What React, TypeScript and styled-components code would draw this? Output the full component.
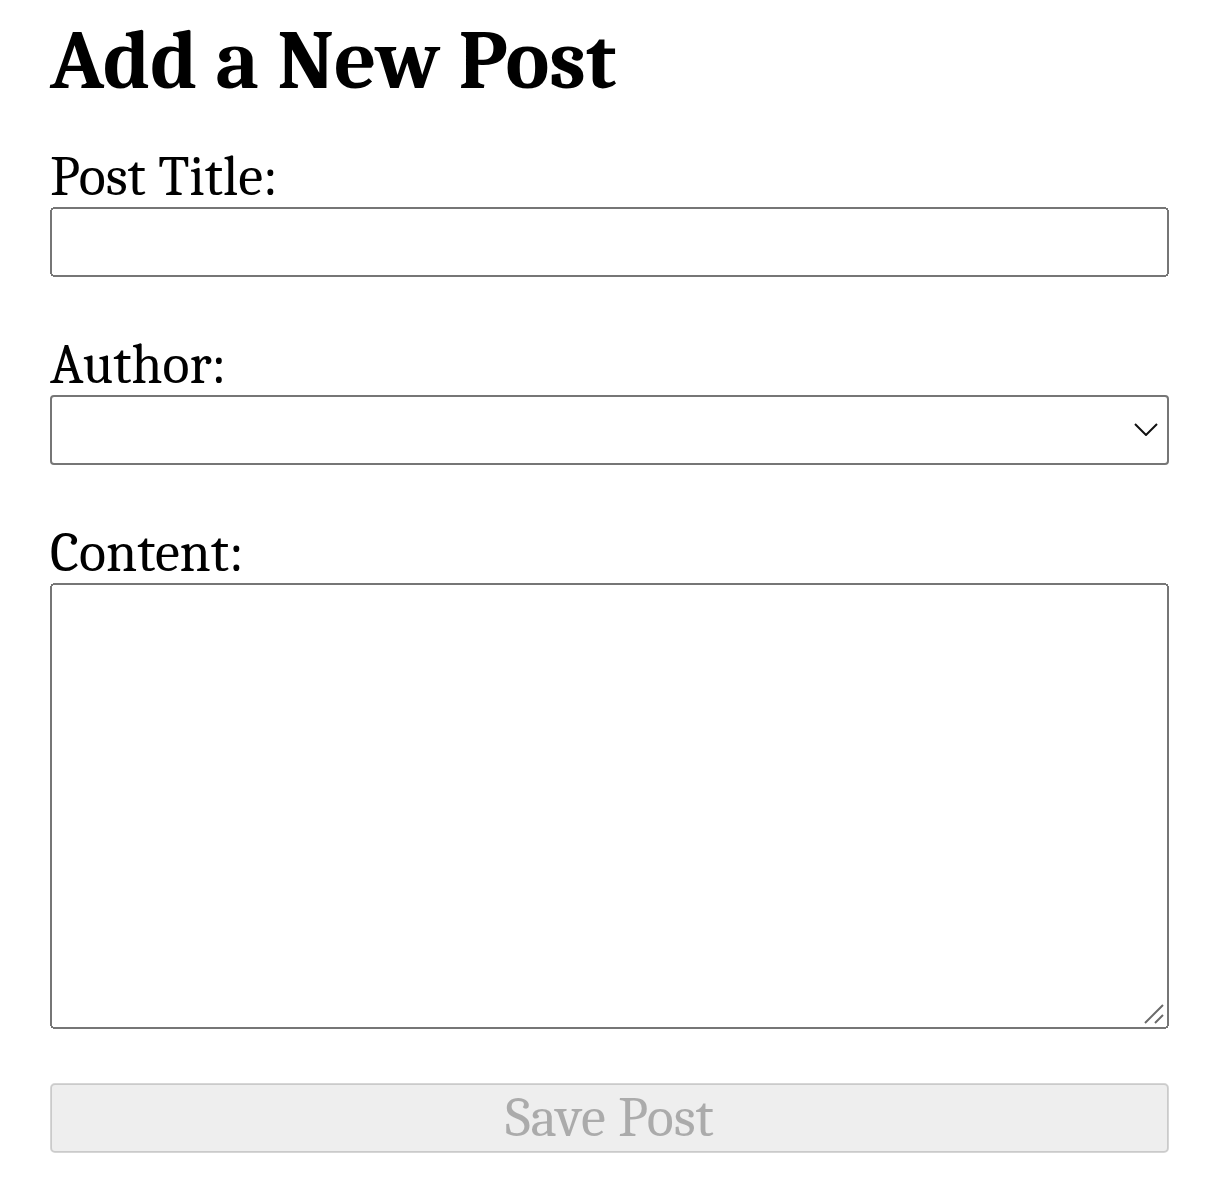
import React from "react";
import styled, { createGlobalStyle } from "styled-components";

const Global = createGlobalStyle`
  html, body { margin: 0; padding: 0; background: #fff; }
  body { font-family: Caladea, "Noto Serif", serif; color: #000; }
`;

const Page = styled.div`
  zoom: 2;
`;

const Form = styled.form`
  display: flex;
  flex-direction: column;
  margin: 0 22.5px 0 25px;
  padding-top: 6px;
`;

const Title = styled.h1`
  margin: 0 0 18.1px;
  font-size: 41.4px;
  line-height: 49.2px;
  font-weight: 700;
`;

const Fields = styled.div`
  display: flex;
  flex-direction: column;
  gap: 29px;
`;

const Field = styled.div`
  display: flex;
  flex-direction: column;
`;

const Label = styled.label`
  font-size: 28px;
  line-height: 30px;
`;

const Input = styled.input`
  box-sizing: border-box;
  width: 100%;
  height: 35px;
  font-family: inherit;
`;

const SelectWrap = styled.div`
  position: relative;
  width: 100%;
`;

const Select = styled.select`
  box-sizing: border-box;
  display: block;
  width: 100%;
  height: 35px;
  appearance: none;
  -webkit-appearance: none;
  background: #fff;
  border: 1px solid #767676;
  border-radius: 2px;
  font-family: inherit;
  font-size: 13px;
  padding: 0 24px 0 4px;
  color: #000;
`;

const Chevron = styled.svg`
  position: absolute;
  right: 5.5px;
  top: 14px;
  width: 12px;
  height: 6.5px;
  pointer-events: none;
`;

const AreaWrap = styled.div`
  position: relative;
  width: 100%;
  display: flex;
`;

const TextArea = styled.textarea`
  box-sizing: border-box;
  width: 100%;
  height: 223px;
  font-family: inherit;
  resize: none;
`;

const Grip = styled.svg`
  position: absolute;
  right: 2.5px;
  bottom: 2.5px;
  width: 10px;
  height: 10px;
  pointer-events: none;
`;

const Button = styled.button`
  box-sizing: border-box;
  width: 100%;
  height: 35px;
  margin-top: 27px;
  font-family: inherit;
  font-size: 28px;
  line-height: 1;
`;

export default function App() {
  return (
    <Page>
      <Global />
      <Form>
        <Title>Add a New Post</Title>
        <Fields>
          <Field>
            <Label htmlFor="postTitle">Post Title:</Label>
            <Input id="postTitle" type="text" />
          </Field>
          <Field>
            <Label htmlFor="postAuthor">Author:</Label>
            <SelectWrap>
              <Select id="postAuthor">
                <option value=""></option>
              </Select>
              <Chevron viewBox="0 0 24 13" fill="none">
                <path d="M1 1 L12 12 L23 1" stroke="#111" strokeWidth="2" />
              </Chevron>
            </SelectWrap>
          </Field>
          <Field>
            <Label htmlFor="postContent">Content:</Label>
            <AreaWrap>
              <TextArea id="postContent" />
              <Grip viewBox="0 0 20 20" fill="none">
                <path d="M1 19 L19 1 M11 19 L19 11" stroke="#6b6b6b" strokeWidth="2" />
              </Grip>
            </AreaWrap>
          </Field>
        </Fields>
        <Button type="button" disabled>
          Save Post
        </Button>
      </Form>
    </Page>
  );
}
